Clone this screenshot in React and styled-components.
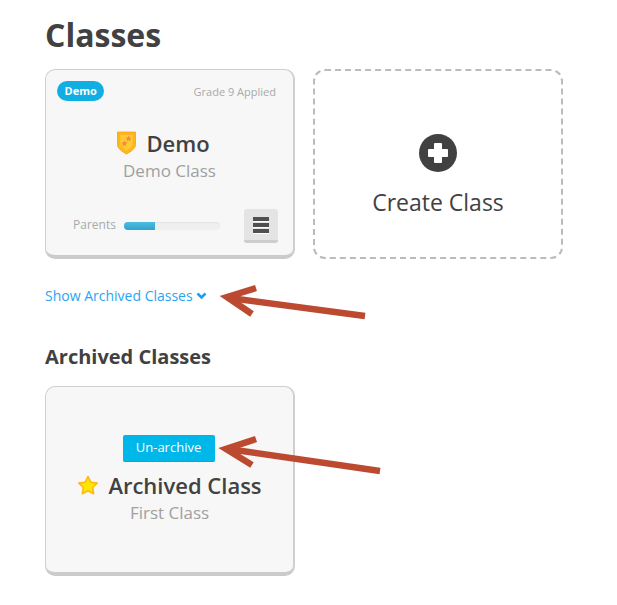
import React from 'react'
import styled, { createGlobalStyle } from 'styled-components'

const GlobalStyle = createGlobalStyle`
body {
  margin: 0;
  background: #fff;
  font-family: 'Open Sans', 'Liberation Sans', sans-serif;
  color: #414141;
}
`

const Page = styled.div`
position: relative;
width: 617px;
height: 605px;
overflow: hidden;
padding: 14px 0 0 45px;
box-sizing: border-box;
`

const Title = styled.h1`
margin: 0 0 13px;
font-size: 32px;
line-height: 42px;
font-weight: 700;
color: #414141;
`

const CardRow = styled.div`
display: flex;
gap: 18px;
`

const Card = styled.div`
width: 250px;
height: 190px;
box-sizing: border-box;
background: #f7f7f7;
border: 1px solid #cfcfcf;
border-bottom: 4px solid #cbcbcb;
border-right-width: 2px;
border-radius: 10px;
display: flex;
flex-direction: column;
`

const CardTop = styled.div`
display: flex;
align-items: center;
justify-content: space-between;
padding: 11px 17px 0 11px;
`

const Badge = styled.span`
background: #10aee2;
color: #fff;
font-size: 11px;
font-weight: 700;
line-height: 20px;
height: 20px;
padding: 0 7.5px;
border-radius: 10px;
`

const Grade = styled.span`
font-size: 11px;
color: #a9a9a9;
`

const CardMiddle = styled.div`
display: flex;
flex-direction: column;
align-items: center;
margin-top: ${props => props.top}px;
`

const NameRow = styled.div`
display: flex;
align-items: center;
gap: ${props => props.gap}px;
margin-right: ${props => props.shift || 0}px;
font-size: 22px;
line-height: 30px;
font-weight: 600;
color: #414141;
`

const SubName = styled.div`
font-size: 17px;
line-height: 26px;
color: #a0a0a0;
`

const CardBottom = styled.div`
display: flex;
align-items: center;
margin-top: 25px;
padding: 0 15px 0 27px;
`

const ProgressLabel = styled.span`
font-size: 12px;
line-height: 14px;
color: #a9a9a9;
margin: 0 8px 2px 0;
`

const Track = styled.div`
width: 97px;
height: 8px;
border-radius: 4px;
background: #efefef;
box-shadow: inset 0 1px 1px #e2e2e2;
overflow: hidden;
margin-right: 24px;
`

const Fill = styled.div`
height: 100%;
background: linear-gradient(#4dbcdf, #2fa3cd);
`

const MenuButton = styled.button`
width: 35px;
height: 34px;
padding: 0;
border: none;
border-bottom: 3px solid #cdcdcd;
border-radius: 3px;
background: #e4e4e4;
display: flex;
flex-direction: column;
align-items: center;
justify-content: center;
gap: 2px;
`

const MenuBar = styled.span`
width: 16px;
height: 4px;
background: #505050;
box-shadow: 0 1px 0 #fff;
`

const CreateCard = styled.div`
width: 250px;
height: 190px;
box-sizing: border-box;
border: 2px dashed #bbb;
border-radius: 12px;
display: flex;
flex-direction: column;
align-items: center;
justify-content: center;
font-size: 23px;
color: #414141;
gap: 14px;
padding-top: 24px;
`

const ShowLink = styled.a`
display: flex;
align-items: center;
gap: 3px;
margin-top: 27px;
font-size: 14px;
line-height: 20px;
color: #2aa4f4;
`

const SubTitle = styled.h2`
margin: 39px 0 17px;
font-size: 20px;
line-height: 24px;
font-weight: 700;
color: #414141;
`

const UnarchiveButton = styled.button`
height: 27px;
width: 92px;
padding: 0 0 2px;
border: none;
border-bottom: 1px solid #0ea5d6;
border-radius: 2px;
background: #00b7e9;
color: #fff;
font-family: inherit;
font-size: 13px;
margin: 0 2px 8px 0;
`

const ArrowLayer = styled.svg`
position: absolute;
top: 0;
left: 0;
pointer-events: none;
`

const ShieldIcon = () => (
  <svg width="19" height="24" viewBox="0 0 20 24">
    <path d="M.500.500h19v13c0 4-4.500 7.500-9.500 10C5 21 .500 17.500.500 13.500z" fill="#ffb81c" stroke="#fba51a" strokeWidth="1" />
    <path d="M3 3h14v10c0 3-3.500 5.500-7 7.500C6.500 18.500 3 16 3 13z" fill="#ffcb33" stroke="#ffab1f" strokeWidth=".8" />
    <path d="M12.200 4l1 2.100 2.300.3-1.700 1.600.4 2.300-2-1.100-2 1.100.4-2.300-1.700-1.600 2.300-.3z" fill="#f28c38" />
    <path d="M7.800 9l1 2.100 2.300.3-1.700 1.600.4 2.300-2-1.100-2 1.100.4-2.300-1.700-1.600 2.300-.3z" fill="#f28c38" />
  </svg>
)

const StarIcon = () => (
  <svg width="22" height="20" viewBox="0 0 22 20">
    <path d="M11 1.500l2.900 5.700 6.300.9-4.600 4.400 1.100 6.200L11 15.800l-5.700 2.900 1.100-6.200-4.600-4.400 6.300-.9z" fill="#ffe600" stroke="#fdbb11" strokeWidth="1.600" strokeLinejoin="round" />
  </svg>
)

const PlusCircle = () => (
  <svg width="38" height="38" viewBox="0 0 38 38">
    <circle cx="19" cy="19" r="19" fill="#414141" />
    <path d="M16 9h6a1 1 0 0 1 1 1v5h5a1 1 0 0 1 1 1v6a1 1 0 0 1-1 1h-5v5a1 1 0 0 1-1 1h-6a1 1 0 0 1-1-1v-5h-5a1 1 0 0 1-1-1v-6a1 1 0 0 1 1-1h5v-5a1 1 0 0 1 1-1z" fill="#fff" />
  </svg>
)

const Chevron = () => (
  <svg width="11" height="8" viewBox="0 0 11 8">
    <path d="M1.500 1.500l4 4 4-4" fill="none" stroke="#1b9ff0" strokeWidth="2.600" />
  </svg>
)

const Arrows = () => (
  <ArrowLayer width="617" height="605" viewBox="0 0 617 605">
    <g fill="none" stroke="#bb4a30" strokeWidth="6.500">
      <path d="M365 316L230 298" />
      <path d="M256 288L227 297L252 314" />
      <path d="M380 471L228 449" />
      <path d="M256 439L226 449L252 465" />
    </g>
  </ArrowLayer>
)

export default function App() {
  return (
    <Page>
      <GlobalStyle />
      <Title>Classes</Title>
      <CardRow>
        <Card>
          <CardTop>
            <Badge>Demo</Badge>
            <Grade>Grade 9 Applied</Grade>
          </CardTop>
          <CardMiddle top={27}>
            <NameRow gap={10} shift={12}><ShieldIcon />Demo</NameRow>
            <SubName>Demo Class</SubName>
          </CardMiddle>
          <CardBottom>
            <ProgressLabel>Parents</ProgressLabel>
            <Track><Fill style={{ width: '33%' }} /></Track>
            <MenuButton><MenuBar /><MenuBar /><MenuBar /></MenuButton>
          </CardBottom>
        </Card>
        <CreateCard>
          <PlusCircle />
          Create Class
        </CreateCard>
      </CardRow>
      <ShowLink>Show Archived Classes <Chevron /></ShowLink>
      <SubTitle>Archived Classes</SubTitle>
      <Card>
        <CardMiddle top={48}>
          <UnarchiveButton>Un-archive</UnarchiveButton>
          <NameRow gap={9}><StarIcon />Archived Class</NameRow>
          <SubName>First Class</SubName>
        </CardMiddle>
      </Card>
      <Arrows />
    </Page>
  )
}
